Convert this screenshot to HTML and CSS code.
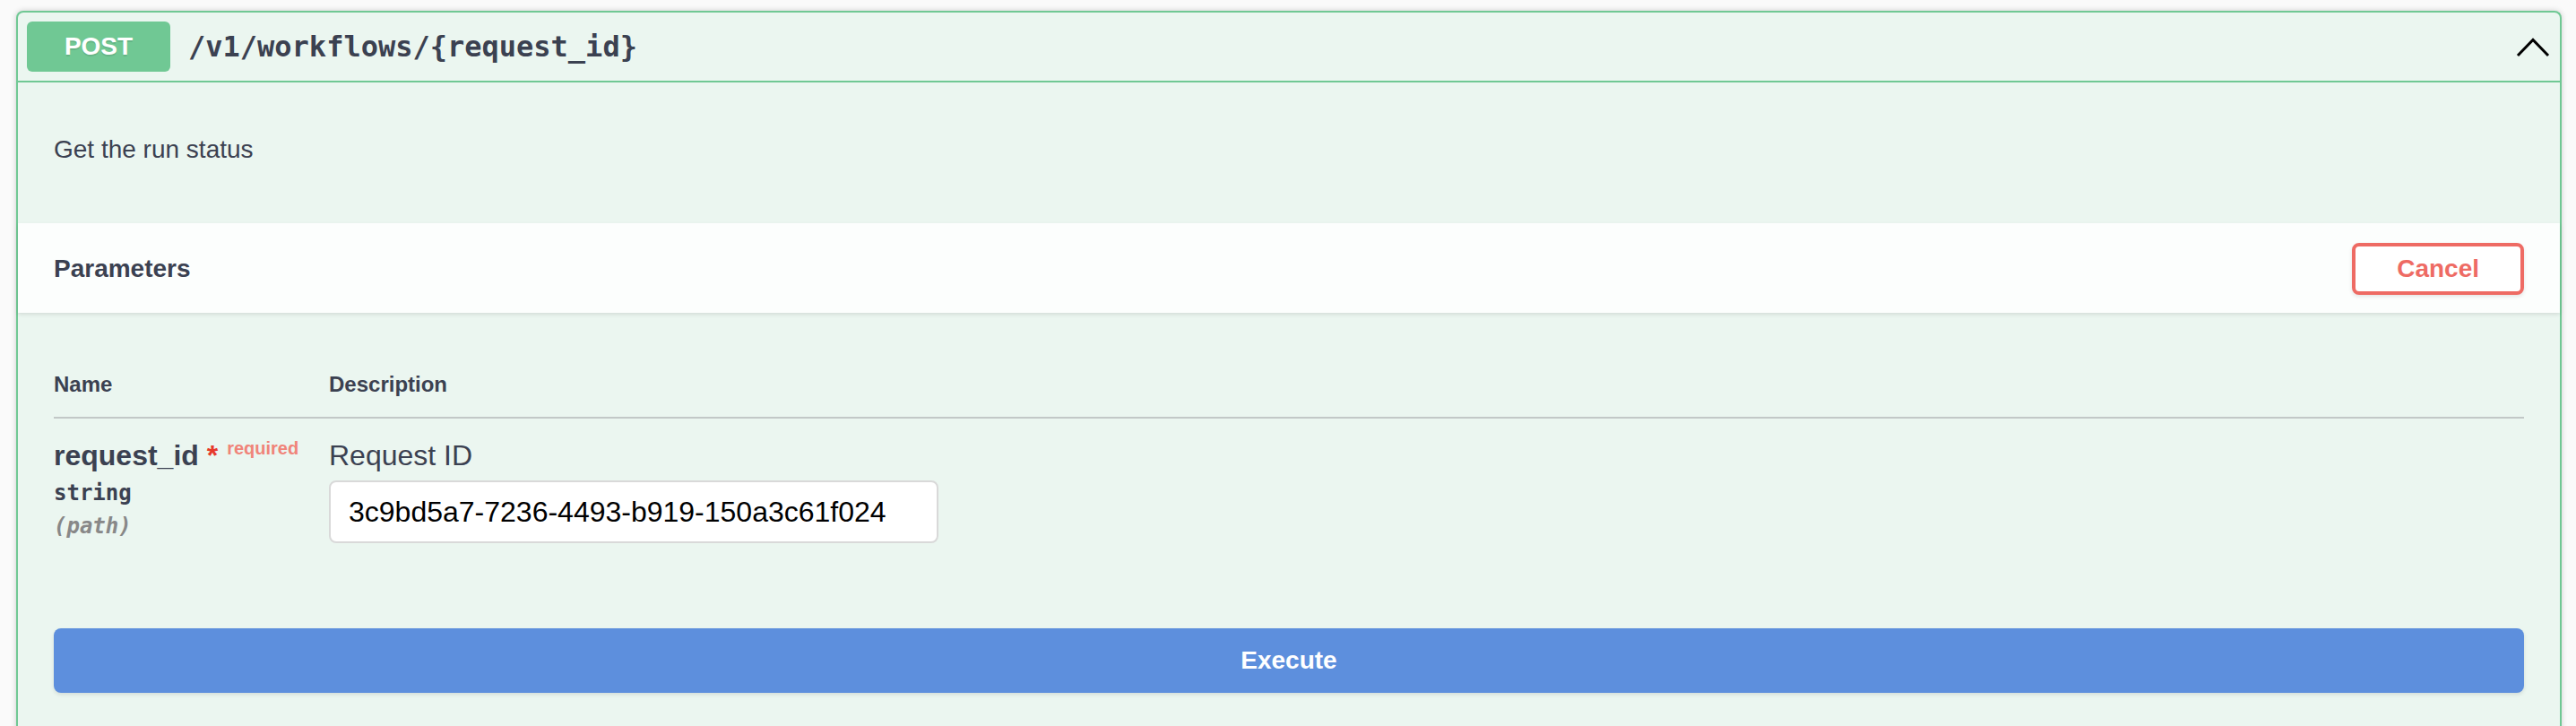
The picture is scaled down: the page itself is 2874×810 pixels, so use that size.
FILE: index.html
```html
<!DOCTYPE html>
<html lang="en">
<head>
<meta charset="utf-8">
<title>POST /v1/workflows/{request_id}</title>
<link rel="stylesheet" href="styles.css">
</head>
<body>
<div class="opblock">
  <div class="summary">
    <span class="method">POST</span>
    <span class="path">/v1/workflows/{request_id}</span>
    <svg class="arrow" width="40" height="24" viewBox="0 0 40 24" aria-hidden="true">
      <polyline points="3,22 20,4.5 37,22" fill="none" stroke="#000" stroke-width="3"/>
    </svg>
  </div>
  <div class="body">
    <div class="desc">Get the run status</div>
    <div class="section-header">
      <h4 class="title">Parameters</h4>
      <button class="btn-cancel">Cancel</button>
    </div>
    <div class="table-container">
      <div class="thead">
        <div class="th col-name">Name</div>
        <div class="th col-desc">Description</div>
      </div>
      <div class="row">
        <div class="col-name">
          <div class="param-name">request_id<span class="star">&nbsp;*</span><span class="req">required</span></div>
          <div class="param-type">string</div>
          <div class="param-in">(path)</div>
        </div>
        <div class="col-desc">
          <div class="param-desc">Request ID</div>
          <input class="param-input" type="text" value="3c9bd5a7-7236-4493-b919-150a3c61f024">
        </div>
      </div>
    </div>
    <div class="execute-wrapper">
      <button class="btn-execute">Execute</button>
    </div>
  </div>
</div>
</body>
</html>
```

FILE: styles.css
```css
html, body {
  margin: 0;
  padding: 0;
  background: #fafafa;
  font-family: "Liberation Sans", Arial, Helvetica, sans-serif;
  color: #3b4151;
}

.opblock {
  margin: 12px 16px 0 18px;
  border: 2px solid #70c894;
  border-bottom: none;
  border-radius: 8px 8px 0 0;
  background: #ebf6f0;
  box-shadow: 0 0 6px rgba(0, 0, 0, 0.19);
  height: 830px;
  box-sizing: border-box;
}

.summary {
  display: flex;
  align-items: center;
  padding: 10px;
  border-bottom: 2px solid #70c894;
}

.method {
  width: 160px;
  height: 56px;
  line-height: 56px;
  border-radius: 6px;
  background: #70c894;
  color: #fff;
  font-size: 28px;
  font-weight: 700;
  text-align: center;
  text-shadow: 0 2px 0 rgba(0, 0, 0, 0.1);
}

.path {
  flex: 1;
  padding: 0 20px;
  font-family: "DejaVu Sans Mono", Menlo, monospace;
  font-weight: 700;
  font-size: 32px;
  color: #3b4151;
}

.arrow {
  display: block;
}

.desc {
  padding: 59px 40px 66px;
  font-size: 28px;
  line-height: 32px;
  color: #3b4151;
}

.section-header {
  display: flex;
  align-items: center;
  min-height: 100px;
  padding: 2px 40px 0;
  box-sizing: border-box;
  background: rgba(255, 255, 255, 0.82);
  box-shadow: 0 2px 4px rgba(0, 0, 0, 0.1);
}

.title {
  flex: 1;
  margin: 0;
  font-size: 28px;
  font-weight: 700;
  color: #3b4151;
}

.btn-cancel {
  font-family: inherit;
  font-size: 28px;
  font-weight: 700;
  line-height: 30px;
  padding: 10px 46px;
  border: 4px solid #ee6b64;
  border-radius: 8px;
  background: #fff;
  color: #ee6b64;
  box-shadow: 0 2px 4px rgba(0, 0, 0, 0.1);
}

.table-container {
  padding: 40px 40px 25px;
}

.thead {
  display: flex;
  border-bottom: 2px solid #c2c8c7;
}

.th {
  padding: 26px 0 22px;
  font-size: 24px;
  line-height: 28px;
  font-weight: 700;
  color: #3b4151;
}

.col-name {
  width: 307px;
  flex: none;
}

.col-desc {
  flex: 1;
}

.row {
  display: flex;
  padding: 20px 0;
}

.param-name {
  font-size: 32px;
  line-height: 42px;
  font-weight: 700;
  color: #3b4151;
  white-space: nowrap;
}

.star {
  color: #e6392b;
}

.req {
  position: relative;
  top: -12px;
  padding: 10px;
  font-size: 20px;
  color: #f08479;
}

.param-type {
  padding: 3px 0 5px;
  font-family: "DejaVu Sans Mono", Menlo, monospace;
  font-size: 24px;
  line-height: 28px;
  font-weight: 700;
  color: #3b4151;
}

.param-in {
  padding: 4px 0;
  font-family: "DejaVu Sans Mono", Menlo, monospace;
  font-size: 24px;
  line-height: 28px;
  font-weight: 700;
  font-style: italic;
  color: #888;
}

.param-desc {
  font-size: 32px;
  line-height: 42px;
  color: #3b4151;
}

.param-input {
  display: block;
  box-sizing: border-box;
  width: 680px;
  height: 70px;
  margin: 7px 0 10px;
  padding: 0 20px;
  border: 2px solid #d9d9d9;
  border-radius: 8px;
  background: #fff;
  font-family: "Liberation Sans", Arial, Helvetica, sans-serif;
  font-size: 32px;
  color: #000;
  outline: none;
}

.execute-wrapper {
  padding: 40px;
}

.btn-execute {
  display: block;
  width: 100%;
  height: 72px;
  border: none;
  border-radius: 8px;
  background: #5d8fdd;
  color: #fff;
  font-family: inherit;
  font-size: 28px;
  font-weight: 700;
  box-shadow: 0 2px 4px rgba(0, 0, 0, 0.1);
}
```
